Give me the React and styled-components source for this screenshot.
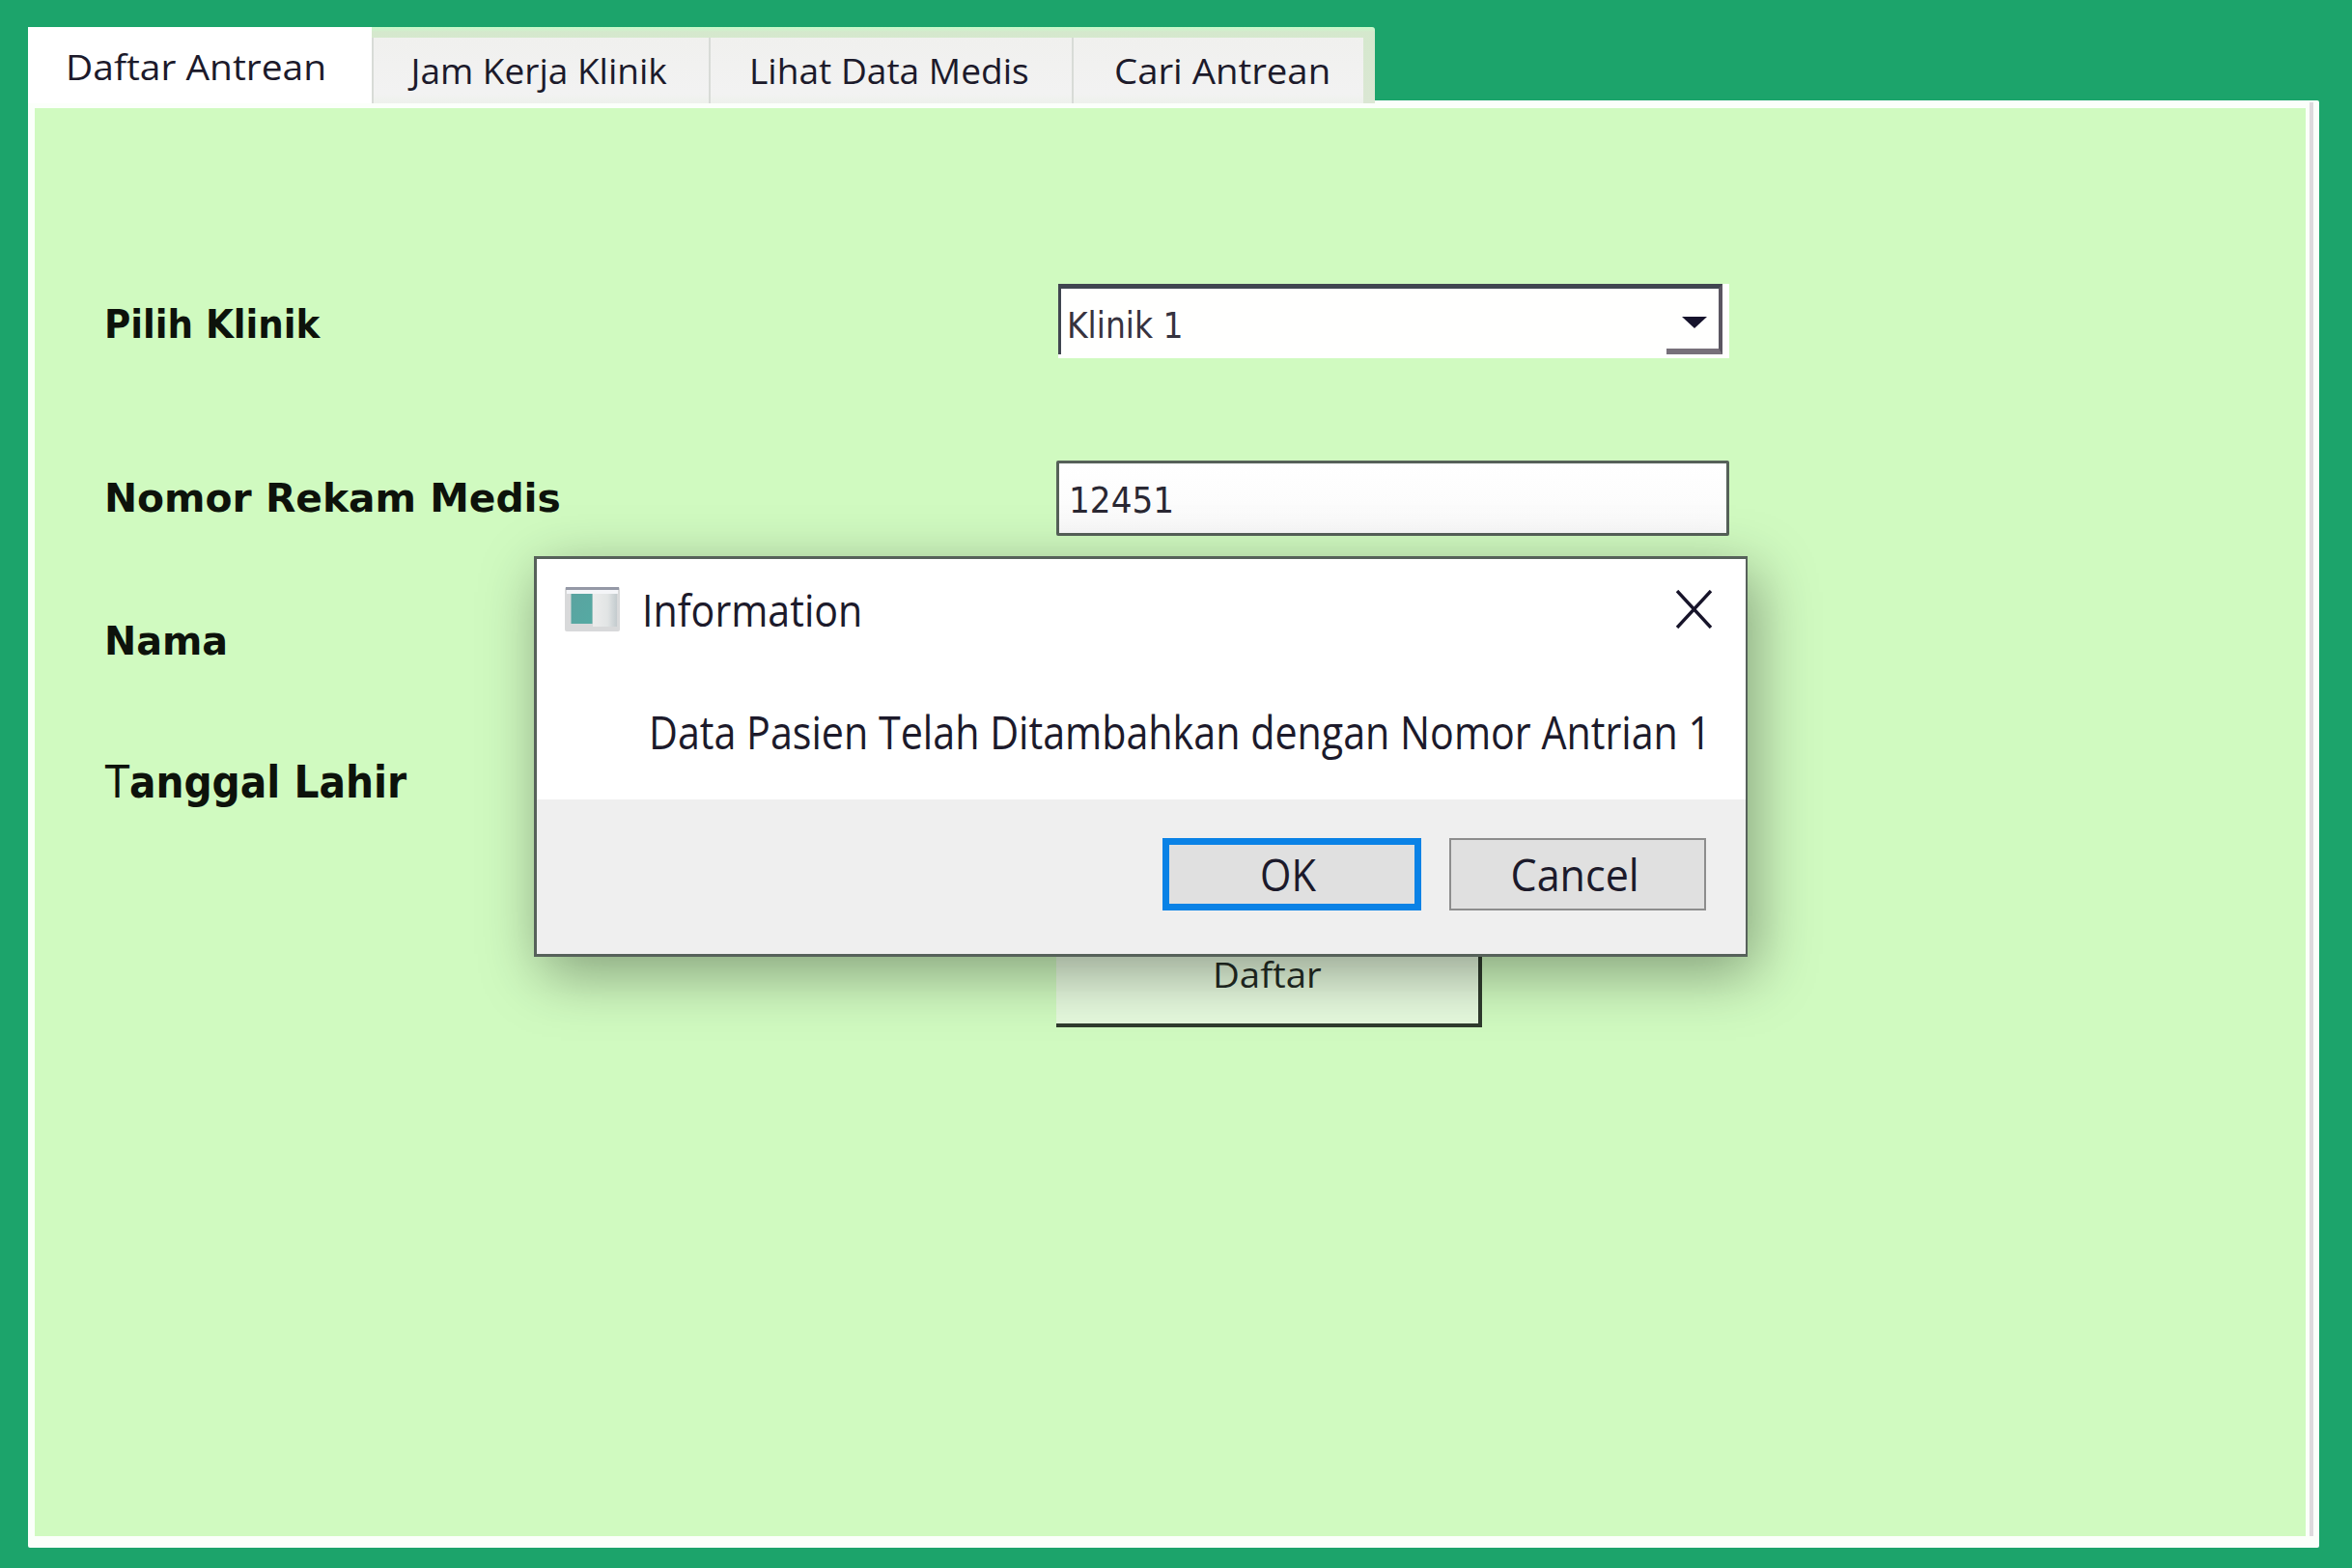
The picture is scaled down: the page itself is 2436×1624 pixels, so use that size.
import React from 'react';
import styled, { createGlobalStyle } from 'styled-components';

const UI = '"Open Sans", "Noto Sans", sans-serif';
const FORM = '"DejaVu Sans Condensed", "DejaVu Sans", sans-serif';

const GlobalStyle = createGlobalStyle`
  *, *::before, *::after { box-sizing: border-box; }
  body { margin: 0; background: #1ca46b; }
`;

const Page = styled.div`
  position: relative;
  display: flex;
  flex-direction: column;
  width: 2436px;
  height: 1624px;
  padding: 28px 34px 21px 29px;
  background: #1ca46b;
  overflow: hidden;
`;

const Text = styled.span`
  display: block;
  white-space: nowrap;
  font-family: ${(p) => p.$font || UI};
  font-size: ${(p) => p.$size}px;
  font-weight: ${(p) => (p.$bold ? 700 : 400)};
  line-height: 50px;
  color: ${(p) => p.$color || '#1c1a2b'};
  transform: scaleX(${(p) => p.$stretch || 1});
  transform-origin: ${(p) => p.$origin || 'left'} center;
  &::first-letter {
    font-weight: ${(p) => (p.$lightInitial ? 400 : 'inherit')};
  }
`;

const TabStrip = styled.div`
  position: relative;
  z-index: 1;
  display: flex;
  align-self: flex-start;
  width: 1395px;
  height: 79px;
  margin-bottom: -3px;
  padding-right: 12px;
  border-radius: 0 3px 0 0;
  background: linear-gradient(#c9fbcb 0, #d5e8cd 5px, #dbe7d4 100%);
`;

const Tab = styled.div`
  flex: none;
  width: ${(p) => p.$width}px;
  margin-top: ${(p) => (p.$active ? 0 : 11)}px;
  padding: ${(p) => (p.$active ? 16 : 9)}px 0 0 ${(p) => p.$indent}px;
  border-left: ${(p) => (p.$active ? 0 : 2)}px solid #d8dbd7;
  background: ${(p) => (p.$active ? '#ffffff' : 'linear-gradient(#f0f0ee, #f2f2f2 85%, #eef1ec)')};
`;

const Panel = styled.div`
  flex: 1;
  display: flex;
  padding: 8px 14px 12px 7px;
  border-radius: 2px;
  background:
    linear-gradient(#dddadd, #dddadd) right 6px top 2px / 4px calc(100% - 14px) no-repeat,
    #fbfffa;
`;

const Form = styled.div`
  flex: 1;
  display: flex;
  flex-direction: column;
  padding-top: 182px;
  background: #d0fac0;
`;

const Row = styled.div`
  display: grid;
  grid-template-columns: 1058px auto;
  justify-content: start;
  height: ${(p) => p.$height}px;
  margin-top: ${(p) => p.$gap || 0}px;
`;

const LabelCell = styled.label`
  padding: ${(p) => p.$top}px 0 0 ${(p) => p.$indent || 72}px;
`;

const Select = styled.div`
  display: flex;
  justify-content: space-between;
  width: 695px;
  height: 77px;
  margin-left: 2px;
  padding-right: 7px;
  padding-bottom: 4px;
  background: #fffffe;
`;

const SelectValue = styled.div`
  flex: 1;
  padding: 14px 0 0 6px;
  border-top: 5px solid #404550;
  border-left: 3px solid #404550;
`;

const DropButton = styled.div`
  display: flex;
  justify-content: center;
  width: 58px;
  padding: 29px 0 0 3px;
  border-top: 5px solid #404550;
  border-right: 4px solid #5b5661;
  border-bottom: 6px solid #77707a;
`;

const Arrow = styled.svg`
  display: block;
  width: 26px;
  height: 12px;
`;

const Input = styled.div`
  width: 697px;
  height: 78px;
  padding: 14px 0 0 10px;
  border: 3px solid #566159;
  border-radius: 2px;
  background: linear-gradient(#ffffff, #fafafa);
`;

const SubmitButton = styled.div`
  width: 441px;
  height: 109px;
  padding: 29px 0 0 162px;
  border: 4px solid #2f3b2d;
  border-top: 0;
  border-left: 0;
  background: #e5f9dd;
`;

const Dialog = styled.section`
  position: absolute;
  z-index: 2;
  left: 553px;
  top: 576px;
  display: flex;
  flex-direction: column;
  width: 1257px;
  height: 415px;
  border: 3px solid #56615a;
  border-right-width: 2px;
  background: #ffffff;
  box-shadow: 8px 17px 58px rgba(0, 0, 0, 0.37);
`;

const TitleBar = styled.header`
  display: flex;
  align-items: center;
  height: 106px;
  padding: 0 35px 2px 29px;
`;

const Title = styled.div`
  flex: 1;
  padding: 2px 0 0 23px;
`;

const WindowIcon = styled.svg`
  display: block;
  width: 57px;
  height: 46px;
`;

const CloseIcon = styled.svg`
  display: block;
  width: 37px;
  height: 40px;
`;

const Message = styled.div`
  height: 143px;
  padding: 48px 0 0 116px;
`;

const Footer = styled.footer`
  flex: 1;
  display: flex;
  justify-content: flex-end;
  gap: 29px;
  padding: 40px 41px 0 0;
  background: #efefef;
`;

const DialogButton = styled.div`
  display: flex;
  justify-content: center;
  width: ${(p) => (p.$primary ? 268 : 266)}px;
  height: 75px;
  padding: ${(p) => (p.$primary ? 5 : 10)}px ${(p) => (p.$primary ? 8 : 6)}px 0 0;
  border: ${(p) => (p.$primary ? '7px solid #0a82e6' : '2px solid #8d8d8d')};
  background: #e0e0e0;
`;

const tabs = [
  { label: 'Daftar Antrean', width: 356, indent: 38.5, stretch: 1.052, active: true },
  { label: 'Jam Kerja Klinik', width: 349, indent: 38.5, stretch: 1.0 },
  { label: 'Lihat Data Medis', width: 376, indent: 40, stretch: 1.002 },
  { label: 'Cari Antrean', width: 302, indent: 42, stretch: 1.036 },
];

function Caption({ top, indent, size = 41, stretch, lightInitial, children }) {
  return (
    <LabelCell $top={top} $indent={indent}>
      <Text $font={FORM} $bold $size={size} $stretch={stretch} $color="#0d120b" $lightInitial={lightInitial}>
        {children}
      </Text>
    </LabelCell>
  );
}

export default function App() {
  return (
    <Page>
      <GlobalStyle />
      <TabStrip>
        {tabs.map((t) => (
          <Tab key={t.label} $width={t.width} $indent={t.indent} $active={t.active}>
            <Text $size={37} $stretch={t.stretch}>{t.label}</Text>
          </Tab>
        ))}
      </TabStrip>
      <Panel>
        <Form>
          <Row $height={77}>
            <Caption top={17} stretch={1.009}>Pilih Klinik</Caption>
            <Select>
              <SelectValue>
                <Text $font={FORM} $size={37} $stretch={0.99} $color="#36333f">Klinik 1</Text>
              </SelectValue>
              <DropButton>
                <Arrow viewBox="0 0 26 12">
                  <path d="M0 0H26L13 12Z" fill="#16132c" />
                </Arrow>
              </DropButton>
            </Select>
          </Row>
          <Row $height={78} $gap={106}>
            <Caption top={14} stretch={1.105}>Nomor Rekam Medis</Caption>
            <Input>
              <Text $font={FORM} $size={37} $stretch={1.03} $color="#2a2833">12451</Text>
            </Input>
          </Row>
          <Row $height={50} $gap={84}>
            <Caption top={0} stretch={1.075}>Nama</Caption>
          </Row>
          <Row $height={50} $gap={96}>
            <Caption top={0} indent={73} size={46} stretch={0.985} lightInitial>Tanggal Lahir</Caption>
          </Row>
          <Row $height={109} $gap={120}>
            <span />
            <SubmitButton>
              <Text $size={37} $stretch={1.037} $color="#232b24">Daftar</Text>
            </SubmitButton>
          </Row>
        </Form>
      </Panel>
      <Dialog>
        <TitleBar>
          <WindowIcon viewBox="0 0 57 46">
            <defs>
              <linearGradient id="pane" x1="0" y1="0" x2="1" y2="1">
                <stop offset="0" stopColor="#5aa3a0" />
                <stop offset="1" stopColor="#55aaa3" />
              </linearGradient>
              <linearGradient id="side" x1="0" y1="0" x2="1" y2="0">
                <stop offset="0" stopColor="#ececec" />
                <stop offset="0.6" stopColor="#e2e5e5" />
                <stop offset="1" stopColor="#c3cbce" />
              </linearGradient>
            </defs>
            <rect x="0" y="0" width="57" height="46" rx="2" fill="#d8d9da" />
            <rect x="1" y="0" width="55" height="3" fill="#9498a6" />
            <rect x="2" y="3" width="53" height="4" fill="#f4f5f8" />
            <rect x="29" y="7" width="25" height="34" fill="url(#side)" />
            <rect x="6.5" y="7" width="22" height="31" fill="url(#pane)" />
          </WindowIcon>
          <Title>
            <Text $size={45} $stretch={0.915}>Information</Text>
          </Title>
          <CloseIcon viewBox="0 0 37 40">
            <path d="M1 1L36 39M36 1L1 39" stroke="#17142a" strokeWidth="3.4" fill="none" />
          </CloseIcon>
        </TitleBar>
        <Message>
          <Text $size={47} $stretch={0.877}>Data Pasien Telah Ditambahkan dengan Nomor Antrian 1</Text>
        </Message>
        <Footer>
          <DialogButton $primary>
            <Text $size={46} $stretch={0.905} $origin="center">OK</Text>
          </DialogButton>
          <DialogButton>
            <Text $size={46} $stretch={0.936} $origin="center">Cancel</Text>
          </DialogButton>
        </Footer>
      </Dialog>
    </Page>
  );
}
